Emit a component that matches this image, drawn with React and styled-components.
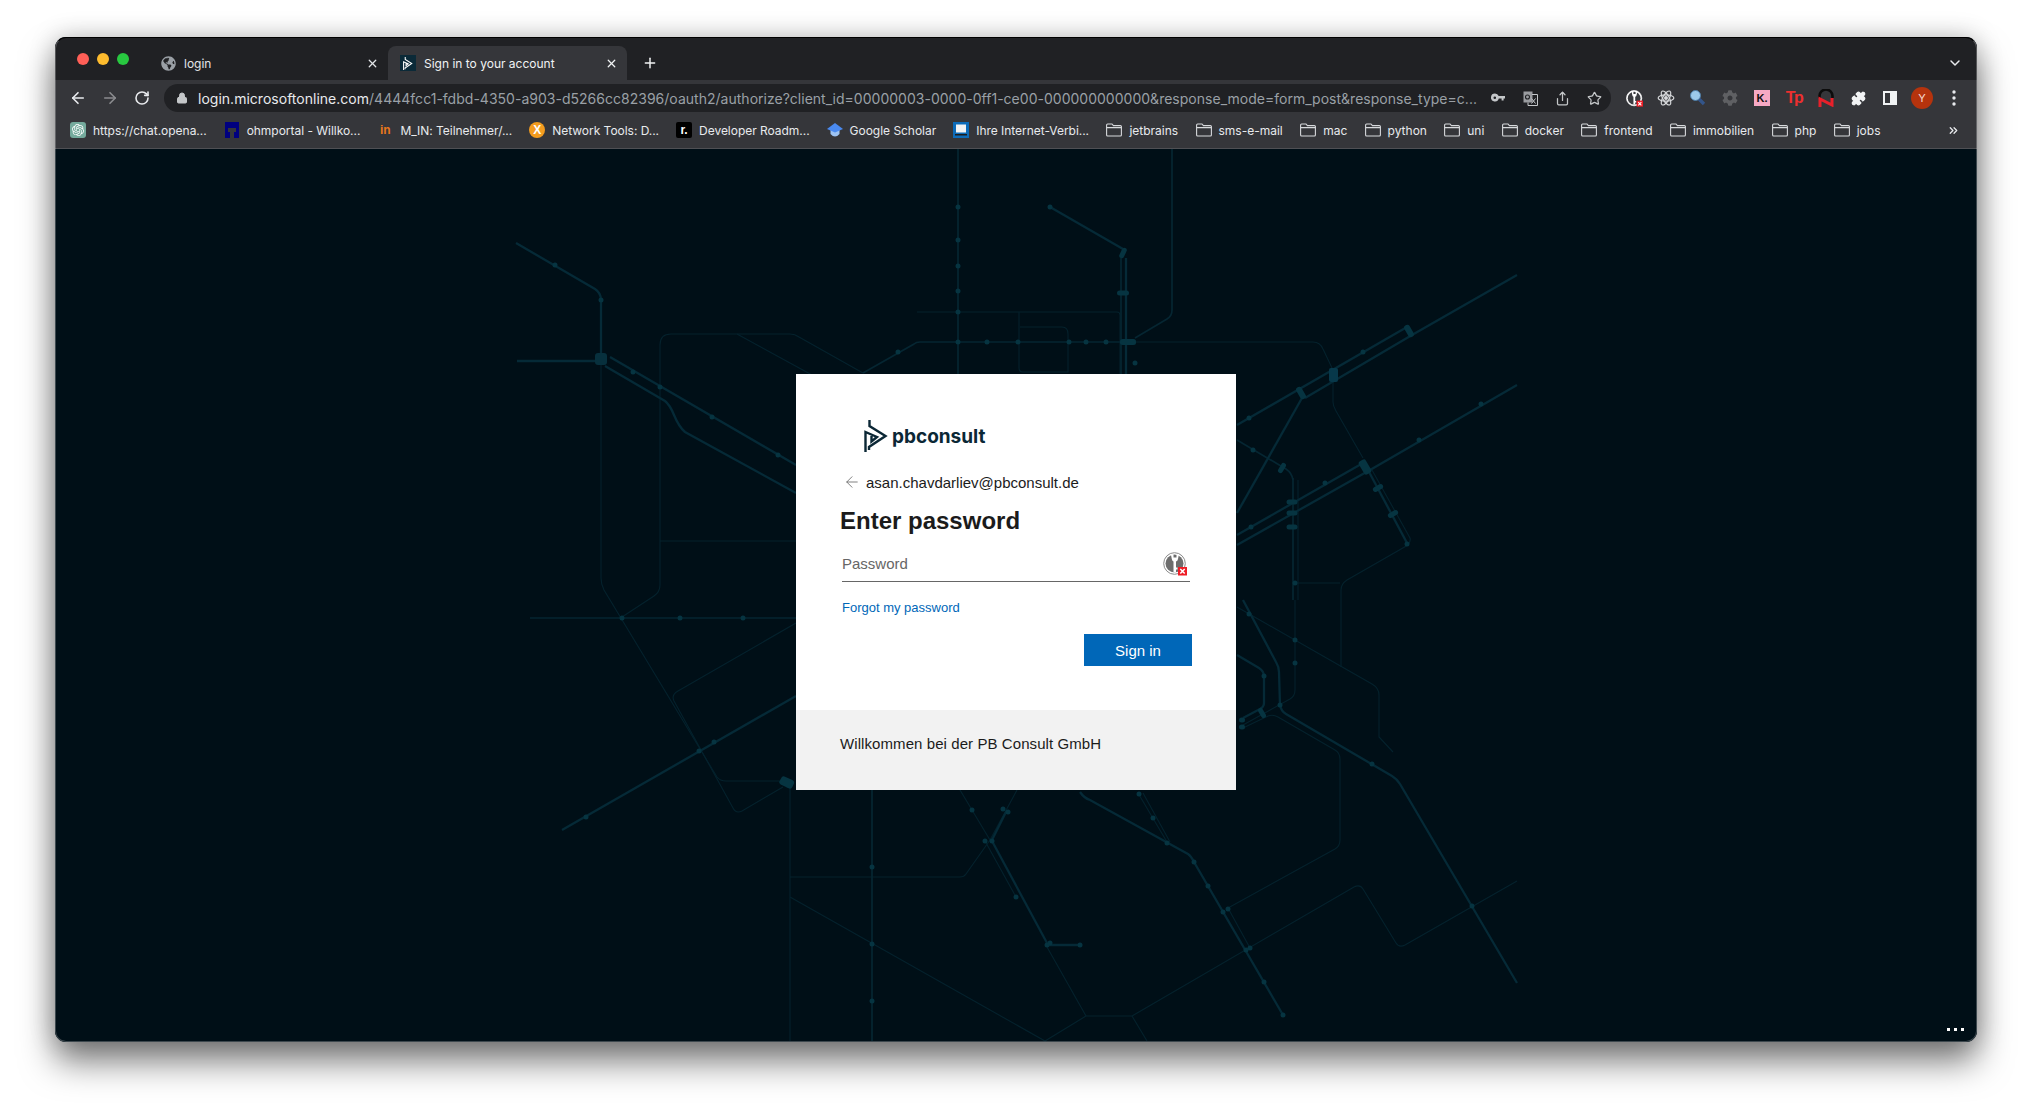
import styled, { createGlobalStyle } from "styled-components";
import { ArrowLeft, ArrowRight, RotateCw, Lock, X, Plus, ChevronDown, Star, Share, ChevronsRight, Puzzle } from "lucide-react";
import { FaGlobeAmericas, FaCog } from "react-icons/fa";
import { SiOpenai } from "react-icons/si";

const GlobalStyle = createGlobalStyle`
  * {
    margin: 0;
    padding: 0;
    box-sizing: border-box;
  }
  html, body {
    width: 2032px;
    height: 1116px;
    background: #fff;
    overflow: hidden;
  }
`;

const Desktop = styled.div`
  width: 2032px;
  height: 1116px;
  padding: 37px 0 0 55px;
`;

const Window = styled.div`
  position: relative;
  width: 1922px;
  height: 1005px;
  border-radius: 11px;
  overflow: hidden;
  display: flex;
  flex-direction: column;
  font-family: Inter, "Liberation Sans", sans-serif;
  background: #000f17;
  &::after {
    content: "";
    position: absolute;
    inset: 0;
    border-radius: 11px;
    border: 1px solid rgba(255, 255, 255, 0.24);
    border-top-color: #000;
    pointer-events: none;
  }
`;

const WindowShadow = styled.div`
  width: 1922px;
  height: 1005px;
  border-radius: 11px;
  box-shadow: 0 20px 34px rgba(0, 0, 0, 0.5), 0 0 26px rgba(0, 0, 0, 0.22);
`;

const TabStrip = styled.div`
  height: 43px;
  background: #202124;
  display: flex;
  align-items: center;
  padding-left: 22px;
  flex-shrink: 0;
`;

const Lights = styled.div`
  display: flex;
  gap: 8px;
  margin-right: 20px;
`;

const Light = styled.span`
  width: 12px;
  height: 12px;
  border-radius: 50%;
  background: ${(p) => p.$color};
`;

const Tab = styled.div`
  position: relative;
  width: 239px;
  height: 34px;
  align-self: flex-end;
  display: flex;
  align-items: center;
  gap: 8px;
  padding: 0 9px 0 12px;
  font-size: 12px;
  color: ${(p) => (p.$active ? "#f1f3f4" : "#e3e5e8")};
  background: ${(p) => (p.$active ? "#35363a" : "transparent")};
  border-radius: 8px 8px 0 0;
`;

const TabTitle = styled.span`
  flex: 1;
  white-space: nowrap;
`;

const Favicon = styled.span`
  width: 16px;
  height: 16px;
  background: #0b2a38;
  display: flex;
  align-items: center;
  justify-content: center;
`;

const NewTab = styled.span`
  margin-left: 15px;
  margin-top: 9px;
  display: flex;
  color: #f1f3f4;
`;

const StripEnd = styled.span`
  margin-left: auto;
  margin-right: 14px;
  display: flex;
  color: #e8eaed;
  padding-top: 9px;
`;

const Toolbar = styled.div`
  height: 36px;
  background: #35363a;
  display: flex;
  align-items: center;
  padding: 0 5px 0 7px;
  flex-shrink: 0;
`;

const NavButton = styled.span`
  width: 32px;
  height: 28px;
  display: flex;
  align-items: center;
  justify-content: center;
  color: ${(p) => (p.$dim ? "#8a8b8e" : "#e8eaed")};
`;

const AddressBar = styled.div`
  width: 1447px;
  height: 28px;
  margin: 0 7px 0 6px;
  border-radius: 14px;
  background: #202124;
  display: flex;
  align-items: center;
  padding: 0 1px 0 12px;
  color: #c4c7c9;
`;

const UrlText = styled.div`
  flex: 1;
  margin-left: 10px;
  font-size: 14px;
  letter-spacing: 0.015px;
  white-space: nowrap;
  overflow: hidden;
  color: #9aa0a6;
`;

const UrlHost = styled.span`
  color: #e8eaed;
`;

const ToolIcon = styled.span`
  width: 32px;
  height: 28px;
  flex-shrink: 0;
  display: flex;
  align-items: center;
  justify-content: center;
  color: ${(p) => p.$color || "#c4c7c9"};
`;

const KBadge = styled.span`
  width: 16px;
  height: 16px;
  background: #f7a9c4;
  color: #111;
  font: 700 11px "Liberation Sans", sans-serif;
  display: flex;
  align-items: center;
  justify-content: center;
`;

const TpMark = styled.span`
  color: #ee2f2f;
  font: 700 16px "Liberation Sans", sans-serif;
  letter-spacing: -1.5px;
`;

const Avatar = styled.span`
  width: 22px;
  height: 22px;
  border-radius: 50%;
  background: #b5330d;
  color: #f6d9cf;
  font-size: 11px;
  display: flex;
  align-items: center;
  justify-content: center;
`;

const BookmarkBar = styled.div`
  height: 33px;
  background: #35363a;
  border-bottom: 1px solid #4f5054;
  display: flex;
  align-items: center;
  padding: 0 16px 4px 15px;
  gap: 17px;
  flex-shrink: 0;
`;

const Bookmark = styled.div`
  display: flex;
  align-items: center;
  gap: 7px;
  font-size: 12px;
  letter-spacing: ${(p) => (p.$folder ? "0" : "-0.03px")};
  margin-left: ${(p) => (p.$folder ? "0.35px" : "0")};
  color: #e8eaed;
  white-space: nowrap;
`;

const BookmarkIcon = styled.span`
  width: 16px;
  height: 16px;
  display: flex;
  align-items: center;
  justify-content: center;
  flex-shrink: 0;
  border-radius: ${(p) => p.$radius || 0};
  background: ${(p) => p.$bg || "transparent"};
  color: ${(p) => p.$color || "#fff"};
  font: 700 ${(p) => p.$size || 11}px "Liberation Sans", sans-serif;
`;

const MoreBookmarks = styled.span`
  margin-left: auto;
  margin-right: 1px;
  display: flex;
  color: #e8eaed;
`;

const Content = styled.main`
  position: relative;
  flex: 1;
  background: #000f17;
  display: flex;
  justify-content: center;
  padding-top: 225px;
`;

const MapLayer = styled.svg`
  position: absolute;
  inset: 0;
  width: 100%;
  height: 100%;
  filter: blur(0.6px);
`;

const Card = styled.section`
  position: relative;
  width: 440px;
  height: 416px;
  background: #fff;
  display: flex;
  flex-direction: column;
  font-family: "Liberation Sans", sans-serif;
  color: #1b1b1b;
`;

const CardBody = styled.div`
  flex: 1;
  padding: 46px 44px 0;
  display: flex;
  flex-direction: column;
`;

const Brand = styled.div`
  display: flex;
  align-items: center;
  gap: 4px;
  height: 32px;
  margin-left: 24px;
`;

const BrandName = styled.span`
  font: 700 19px Inter, sans-serif;
  color: #0b2735;
`;

const Identity = styled.div`
  display: flex;
  align-items: center;
  height: 20px;
  margin-top: 20px;
  margin-left: 3px;
  gap: 5px;
  font-size: 15px;
  color: #666;
`;

const Email = styled.span`
  color: #1b1b1b;
`;

const Title = styled.h1`
  font-size: 24px;
  line-height: 28px;
  font-weight: 700;
  margin-top: 15px;
`;

const PasswordField = styled.div`
  display: flex;
  align-items: center;
  justify-content: space-between;
  width: 348px;
  height: 36px;
  margin: 11px 0 0 2px;
  padding-right: 3px;
  border-bottom: 1px solid #666;
  font-size: 15px;
  color: #666;
`;

const ForgotLink = styled.a`
  font-size: 13px;
  line-height: 16px;
  color: #0067b8;
  margin: 18px 0 0 2px;
`;

const Actions = styled.div`
  display: flex;
  justify-content: flex-end;
  margin: 18px 0 0;
  width: 352px;
`;

const SignIn = styled.button`
  width: 108px;
  height: 32px;
  border: none;
  background: #0067b8;
  color: #fff;
  font: 15px "Liberation Sans", sans-serif;
`;

const CardFooter = styled.footer`
  height: 80px;
  background: #f2f2f2;
  padding: 25px 44px 0;
  font-size: 15px;
  line-height: 18px;
  letter-spacing: 0.08px;
`;

const Dots = styled.div`
  position: absolute;
  right: 13px;
  bottom: 11px;
  display: flex;
  gap: 4px;
`;

const Dot = styled.span`
  width: 3px;
  height: 3px;
  background: #fff;
`;

const thick = [
  "M516 243 L595 289 Q601 293 601 300 V353",
  "M517 361 H595",
  "M610 357 L796 465",
  "M605 366 L665 401 Q670 405 674 415 Q679 427 685 432 L796 493",
  "M1050 207 L1123 249",
  "M1126 258 V374",
  "M562 830 L796 696",
  "M1237 425 L1407 327",
  "M1305 398 L1412 335 L1517 275",
  "M1237 535 L1363 463",
  "M1237 545 L1370 470 L1517 385",
  "M1302 398 L1237 513",
  "M1368 470 L1407 543",
  "M1243 600 L1276 662 Q1279 667 1279 672 L1280 705 Q1281 711 1286 714 L1392 776 Q1397 779 1400 784 L1517 983",
  "M1080 792 Q1084 798 1090 800 L1168 843 L1188 854 Q1191 856 1194 862 L1283 1015",
  "M1007 810 L992 840",
  "M992 841 L1047 943",
  "M1047 945 H1080",
  "M1237 655 L1259 668 Q1264 671 1264 677 V703 Q1264 707 1260 709 L1243 718",
];

const medium = [
  "M958 149 V374",
  "M872 790 V1041",
  "M863 373 L914 344 Q916 342 920 342 H1135",
  "M1172 149 V310 Q1172 316 1167 319 L1135 338",
  "M1121 258 V374",
  "M1293 478 V600",
  "M1237 440 L1286 469 Q1292 473 1293 480",
  "M530 618 H796",
];

const thin = [
  "M660 345 Q660 334 671 334 H790 Q795 334 799 337 L863 373",
  "M737 334 L812 375",
  "M660 345 V585 Q660 592 654 596 L622 617",
  "M660 541 H796",
  "M601 365 V578 Q601 584 604 590 L717 777 Q720 781 726 781 H783",
  "M796 623 L678 691 Q671 695 674 701 L733 808 Q736 814 742 811 L783 787",
  "M790 787 V1041",
  "M790 877 H960 Q964 877 966 874 L990 840",
  "M790 897 L1045 1041",
  "M960 790 L990 840",
  "M1017 790 L990 840",
  "M917 312 H1117 Q1120 312 1120 315 V374",
  "M1019 312 V368 Q1019 372 1023 372 H1068 V334 Q1068 327 1062 327 H1020",
  "M1135 342 H1313 Q1320 342 1323 349 L1333 370 V402 Q1333 406 1336 411 L1363 458",
  "M1372 470 L1410 538 Q1411 541 1408 545 L1347 580 Q1341 584 1341 590 V667",
  "M1298 480 V600",
  "M1295 583 H1340",
  "M1237 607 L1372 684 Q1379 688 1379 695 V737 L1393 752",
  "M1295 600 V690 Q1295 696 1290 699 L1243 725",
  "M1243 728 L1268 716 Q1273 714 1278 717 L1335 750 Q1340 753 1340 759 V840 Q1340 846 1335 849 L1228 908",
  "M1138 793 L1167 842",
  "M1143 793 L1170 842",
  "M1228 908 L1250 948",
  "M1132 1016 L1354 887 Q1360 884 1363 889 L1396 943 Q1399 948 1405 945 L1517 881",
  "M1086 1016 H1132",
  "M1086 1016 L1045 1041",
  "M1132 1016 L1147 1041",
  "M1047 947 L1086 1016",
  "M985 841 L1016 897",
];

const dots = [
  [555, 265], [601, 300], [633, 372], [660, 387], [712, 417], [778, 455],
  [898, 352], [958, 342], [987, 342], [1018, 342], [958, 207], [958, 240], [958, 266], [958, 291], [958, 312],
  [1069, 342], [1086, 342], [1106, 342], [1135, 363], [622, 618], [680, 618], [743, 618],
  [586, 817], [714, 742], [699, 751], [972, 810], [1003, 809], [1008, 812], [985, 841], [992, 841], [1016, 897],
  [872, 867], [872, 944], [872, 1001], [1050, 207], [1249, 418], [1363, 352], [1253, 450],
  [1251, 527], [1325, 483], [1419, 440], [1481, 404], [1407, 544], [1295, 583], [1249, 614],
  [1295, 640], [1295, 663], [1264, 676], [1167, 843], [1194, 862], [1208, 886], [1223, 912], [1228, 909],
  [1246, 950], [1250, 948], [1264, 982], [1283, 1015], [1372, 764], [1472, 906], [1280, 705],
  [1139, 794], [1153, 818], [1047, 945], [1050, 943], [1080, 945], [782, 782], [788, 785],
];

const capsules = [
  [1123, 253, 11, 5, -65], [1123, 293, 12, 5, 0], [1128, 342, 16, 6, 0], [1301, 393, 13, 6, 60], [1409, 331, 13, 6, 60],
  [1282, 468, 11, 5, -60], [1292, 502, 11, 5, 0], [1292, 513, 11, 5, 0], [1292, 527, 11, 5, 0],
  [1365, 467, 15, 8, 60], [1378, 488, 11, 5, -30], [1393, 514, 11, 5, -30], [1262, 713, 11, 5, 60],
  [1242, 720, 6, 5, 0], [1242, 727, 6, 5, 0],
];

const lineSet = (list, color, width) =>
  list.map((d) => <path key={d} d={d} fill="none" stroke={color} strokeWidth={width} />);

const MetroMap = () => (
  <MapLayer viewBox="55 149 1922 893" preserveAspectRatio="none">
    {lineSet(thin, "#04222d", 1.1)}
    {lineSet(medium, "#052632", 1.7)}
    {lineSet(thick, "#052a37", 2.3)}
    {dots.map(([x, y]) => (
      <circle key={`${x}-${y}`} cx={x} cy={y} r="2.5" fill="#063441" />
    ))}
    {capsules.map(([x, y, w, h, rot]) => (
      <rect
        key={`${x}-${y}`}
        x={x - w / 2}
        y={y - h / 2}
        width={w}
        height={h}
        rx="2.5"
        fill="#063441"
        transform={`rotate(${rot} ${x} ${y})`}
      />
    ))}
    <rect x="595" y="353" width="12" height="12" rx="3" fill="#07303d" />
    <rect x="1329" y="368" width="9" height="14" rx="2" fill="#07384a" />
    <rect x="780" y="778" width="14" height="9" rx="3" fill="#063441" transform="rotate(25 787 782)" />
  </MapLayer>
);

const BrandMark = ({ size = 32, color = "#0b2735", width = 2.4 }) => (
  <svg width={(size * 24) / 32} height={size} viewBox="0 0 24 32" fill="none" stroke={color} strokeWidth={width}>
    <path d="M1.5 32 V12 L13 17 L7.5 21.5 V16" />
    <path d="M5.5 0 V6 L21.5 16 L5 27 V30" />
  </svg>
);

const KeyhashIcon = ({ size = 24, ring = "#8a8a8a", fill = "#6d6d6d", hole = "#fff" }) => (
  <svg width={size} height={size} viewBox="0 0 24 24">
    <circle cx="11.5" cy="11.5" r="10.8" fill="#fff" stroke={ring} strokeWidth="1" />
    <circle cx="11.5" cy="11.5" r="9" fill={fill} />
    <path d="M8 3 L8.8 7 Q9.2 9 10.5 9.5 V20.5 H13 V17.5 H14.5 V15.5 H13 V9.5 Q14.6 9 15 7 L15.8 3 L13.5 2.5 V5.5 H10.5 V2.5 Z" fill={hole} />
    <rect x="15" y="15" width="9" height="8.5" fill="#ee1c25" />
    <path d="M17.3 17 L21.7 21.6 M21.7 17 L17.3 21.6" stroke="#fff" strokeWidth="1.5" />
  </svg>
);

const KeyIcon = () => (
  <svg width="14" height="10" viewBox="0 0 14 10" fill="#c4c7c9">
    <path d="M4 .5 A4 4 0 0 1 7.7 3 H14 V5.6 H12.6 V7.6 H10.6 V5.6 H7.8 A4 4 0 1 1 4 .5 Z M3.8 3.5 A1.3 1.3 0 1 0 3.8 6.1 A1.3 1.3 0 1 0 3.8 3.5 Z" fillRule="evenodd" />
  </svg>
);

const TranslateIcon = () => (
  <svg width="15" height="15" viewBox="0 0 15 15">
    <rect x="0.5" y="0.5" width="9" height="11" fill="#9a9ca0" />
    <path d="M9 3.5 H14.5 V14.5 H5 V11.5" fill="none" stroke="#c4c7c9" />
    <circle cx="4.5" cy="6" r="2" fill="none" stroke="#202124" strokeWidth="1.1" />
    <path d="M8.5 7.5 L12.5 12.5 M12.5 7.5 L8.5 12.5" stroke="#c4c7c9" />
  </svg>
);

const AtomIcon = () => (
  <svg width="18" height="18" viewBox="0 0 24 24" fill="none" stroke="#d8dadc" strokeWidth="1.6">
    <ellipse cx="12" cy="12" rx="10.5" ry="4.2" />
    <ellipse cx="12" cy="12" rx="10.5" ry="4.2" transform="rotate(60 12 12)" />
    <ellipse cx="12" cy="12" rx="10.5" ry="4.2" transform="rotate(120 12 12)" />
    <circle cx="12" cy="12" r="1.8" fill="#d8dadc" />
  </svg>
);

const LensIcon = () => (
  <svg width="18" height="18" viewBox="0 0 18 18">
    <path d="M9 9 L15 15" stroke="#33558a" strokeWidth="3.4" />
    <circle cx="6.5" cy="6.5" r="5" fill="#9cc9ea" stroke="#4d7da6" />
  </svg>
);

const NIcon = () => (
  <svg width="16" height="18" viewBox="0 0 16 18" fill="none">
    <path d="M1.5 9 V7 A6.5 6.5 0 0 1 14.5 7 V9" stroke="#0c0c0c" strokeWidth="2.6" />
    <path d="M2 18 V10 L14 16 V9" stroke="#e8202a" strokeWidth="3" />
  </svg>
);

const PanelIcon = () => (
  <svg width="14" height="14" viewBox="0 0 14 14">
    <rect x="1" y="1" width="12" height="12" fill="none" stroke="#f1f3f4" strokeWidth="2" />
    <rect x="7" y="1" width="6" height="12" fill="#f1f3f4" />
  </svg>
);

const MoreIcon = () => (
  <svg width="4" height="16" viewBox="0 0 4 16" fill="#e8eaed">
    <circle cx="2" cy="2" r="1.7" />
    <circle cx="2" cy="8" r="1.7" />
    <circle cx="2" cy="14" r="1.7" />
  </svg>
);

const FolderIcon = () => (
  <svg width="16" height="14" viewBox="0 0 16 14" fill="none" stroke="#d7d9dc" strokeWidth="1.1">
    <path d="M.6 2 Q.6 1 1.6 1 H6 L7.4 2.6 H14.4 Q15.4 2.6 15.4 3.6 V12 Q15.4 13 14.4 13 H1.6 Q.6 13 .6 12 Z" />
    <path d="M.6 4.6 H15.4" />
  </svg>
);

const OhmIcon = () => (
  <svg width="14" height="16" viewBox="0 0 14 16" fill="#00007f">
    <path d="M0 0 H14 V16 H9 V10 H11 V6 H3 V10 H5 V16 H0 Z" />
  </svg>
);

const ScholarIcon = () => (
  <svg width="16" height="16" viewBox="0 0 16 16">
    <path d="M3.5 8 H12.5 V12 Q8 17 3.5 12 Z" fill="#9dc3f2" />
    <path d="M8 1 L16 7 L8 10.5 L0 7 Z" fill="#4a8af0" />
  </svg>
);

const ComputerIcon = () => (
  <svg width="16" height="16" viewBox="0 0 16 16">
    <rect width="16" height="16" fill="#0d6bb8" />
    <rect x="3" y="2.5" width="10" height="8" fill="#f3f3f3" />
    <rect x="2" y="12" width="12" height="1.5" fill="#1c1c1c" />
  </svg>
);

const sites = [
  { label: "https://chat.opena...", icon: <BookmarkIcon $bg="#74aa9c" $radius="3px"><SiOpenai size={12} /></BookmarkIcon> },
  { label: "ohmportal - Willko...", icon: <BookmarkIcon><OhmIcon /></BookmarkIcon> },
  { label: "M_IN: Teilnehmer/...", icon: <BookmarkIcon $color="#e8761c" $size={12}>in</BookmarkIcon> },
  { label: "Network Tools: D...", icon: <BookmarkIcon $bg="#f39c1f" $radius="50%" $size={12}>X</BookmarkIcon> },
  { label: "Developer Roadm...", icon: <BookmarkIcon $bg="#000" $radius="2px" $size={12}>r.</BookmarkIcon> },
  { label: "Google Scholar", icon: <BookmarkIcon><ScholarIcon /></BookmarkIcon> },
  { label: "Ihre Internet-Verbi...", icon: <BookmarkIcon><ComputerIcon /></BookmarkIcon> },
];

const folders = ["jetbrains", "sms-e-mail", "mac", "python", "uni", "docker", "frontend", "immobilien", "php", "jobs"];

const URL_PATH =
  "/4444fcc1-fdbd-4350-a903-d5266cc82396/oauth2/authorize?client_id=00000003-0000-0ff1-ce00-000000000000&response_mode=form_post&response_type=c...";

const App = () => {
  return (
    <>
      <GlobalStyle />
      <Desktop>
        <WindowShadow>
          <Window>
            <TabStrip>
              <Lights>
                <Light $color="#ff5f57" />
                <Light $color="#febc2e" />
                <Light $color="#28c840" />
              </Lights>
              <Tab>
                <FaGlobeAmericas size={15} color="#9aa0a6" />
                <TabTitle>login</TabTitle>
                <X size={13} strokeWidth={2.4} />
              </Tab>
              <Tab $active>
                <Favicon>
                  <BrandMark size={13} color="#fff" width={2.6} />
                </Favicon>
                <TabTitle>Sign in to your account</TabTitle>
                <X size={13} strokeWidth={2.4} />
              </Tab>
              <NewTab>
                <Plus size={16} strokeWidth={2.2} />
              </NewTab>
              <StripEnd>
                <ChevronDown size={16} strokeWidth={2.2} />
              </StripEnd>
            </TabStrip>

            <Toolbar>
              <NavButton>
                <ArrowLeft size={18} strokeWidth={2.2} />
              </NavButton>
              <NavButton $dim>
                <ArrowRight size={18} strokeWidth={2.2} />
              </NavButton>
              <NavButton>
                <RotateCw size={16} strokeWidth={2.4} />
              </NavButton>
              <AddressBar>
                <Lock size={12} fill="#c4c7c9" />
                <UrlText>
                  <UrlHost>login.microsoftonline.com</UrlHost>
                  {URL_PATH}
                </UrlText>
                <ToolIcon><KeyIcon /></ToolIcon>
                <ToolIcon><TranslateIcon /></ToolIcon>
                <ToolIcon><Share size={15} /></ToolIcon>
                <ToolIcon><Star size={15} strokeWidth={2} /></ToolIcon>
              </AddressBar>
              <ToolIcon><KeyhashIcon size={17} ring="#fff" fill="#3a3b3f" /></ToolIcon>
              <ToolIcon><AtomIcon /></ToolIcon>
              <ToolIcon><LensIcon /></ToolIcon>
              <ToolIcon $color="#5f6063"><FaCog size={16} /></ToolIcon>
              <ToolIcon><KBadge>K.</KBadge></ToolIcon>
              <ToolIcon><TpMark>Tp</TpMark></ToolIcon>
              <ToolIcon><NIcon /></ToolIcon>
              <ToolIcon $color="#f1f3f4"><Puzzle size={15} fill="#f1f3f4" /></ToolIcon>
              <ToolIcon><PanelIcon /></ToolIcon>
              <ToolIcon><Avatar>Y</Avatar></ToolIcon>
              <ToolIcon><MoreIcon /></ToolIcon>
            </Toolbar>

            <BookmarkBar>
              {sites.map((site) => (
                <Bookmark key={site.label}>
                  {site.icon}
                  {site.label}
                </Bookmark>
              ))}
              {folders.map((name) => (
                <Bookmark key={name} $folder>
                  <BookmarkIcon><FolderIcon /></BookmarkIcon>
                  {name}
                </Bookmark>
              ))}
              <MoreBookmarks>
                <ChevronsRight size={13} strokeWidth={2.4} />
              </MoreBookmarks>
            </BookmarkBar>

            <Content>
              <MetroMap />
              <Card>
                <CardBody>
                  <Brand>
                    <BrandMark />
                    <BrandName>pbconsult</BrandName>
                  </Brand>
                  <Identity>
                    <ArrowLeft size={18} strokeWidth={1.1} />
                    <Email>asan.chavdarliev@pbconsult.de</Email>
                  </Identity>
                  <Title>Enter password</Title>
                  <PasswordField>
                    Password
                    <KeyhashIcon />
                  </PasswordField>
                  <ForgotLink>Forgot my password</ForgotLink>
                  <Actions>
                    <SignIn>Sign in</SignIn>
                  </Actions>
                </CardBody>
                <CardFooter>Willkommen bei der PB Consult GmbH</CardFooter>
              </Card>
              <Dots>
                <Dot />
                <Dot />
                <Dot />
              </Dots>
            </Content>
          </Window>
        </WindowShadow>
      </Desktop>
    </>
  );
};

export default App;
